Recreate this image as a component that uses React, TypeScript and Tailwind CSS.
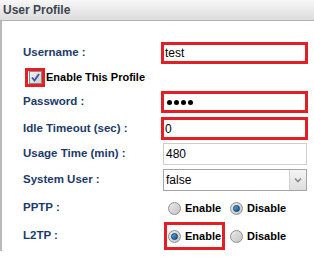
import React from 'react';

const labelCls = 'w-[138px] shrink-0 text-[11.5px] font-bold text-[#1b3a6c] leading-none';

function Radio({ checked }: { checked?: boolean }) {
    return (
        <span className="w-[13px] h-[13px] rounded-full border border-[#8f8f8f] bg-gradient-to-br from-[#e9e9e9] to-[#c4c4c4] flex items-center justify-center shrink-0">
            {checked && (
                <span className="w-[7px] h-[7px] rounded-full bg-gradient-to-br from-[#5fb0e8] to-[#0b4f8c] border border-[#0a3d6e]" />
            )}
        </span>
    );
}

function RadioGroup({ value, marked }: { value: 'enable' | 'disable'; marked?: boolean }) {
    return (
        <div className="flex items-center h-full">
            <div
                className={`flex items-center h-full w-[61px] border-[3px] pl-[1px] gap-[4px] ${
                    marked ? 'border-[#e31e24]' : 'border-transparent'
                }`}
            >
                <Radio checked={value === 'enable'} />
                <span className="text-[11px] font-bold text-black">Enable</span>
            </div>
            <div className="flex items-center ml-[5px] gap-[4px]">
                <Radio checked={value === 'disable'} />
                <span className="text-[11px] font-bold text-black">Disable</span>
            </div>
        </div>
    );
}

export default function App() {
    return (
        <div className="w-[314px] h-[273px] bg-white overflow-hidden font-['Liberation_Sans',Arial,sans-serif]">
            <div className="h-[21px] bg-gradient-to-b from-[#f7f7f7] to-[#dcdcdc] border-b border-[#b3b3b3] px-[3px] flex items-center text-[12px] font-bold text-[#3d4551]">
                User Profile
            </div>

            <div className="h-[230px] border-l-2 border-[#b9b9b9] pt-[21px] pl-[21px]">
                {/* Username */}
                <div className="flex items-center h-[22px]">
                    <span className={labelCls}>Username :</span>
                    <div className="w-[147px] h-full border-[3px] border-[#e31e24] bg-white flex items-center pl-[1px] text-[12px] text-black">
                        test
                    </div>
                </div>

                {/* Enable This Profile */}
                <div className="flex items-center h-[19px] mt-[4px]">
                    <div className="w-[20px] h-[19px] border-[3px] border-[#e31e24] flex items-center justify-center ml-[2px]">
                        <span className="w-[13px] h-[13px] border border-[#8a8a8a] bg-gradient-to-br from-[#f2f2f2] to-[#cfcfcf] flex items-center justify-center">
                            <svg width="9" height="9" viewBox="0 0 9 9">
                                <path d="M1 4.5 L3.5 7.5 L8 1" fill="none" stroke="#3b4fa8" strokeWidth="1.8" />
                            </svg>
                        </span>
                    </div>
                    <span className="ml-[1px] text-[11px] font-bold text-black">Enable This Profile</span>
                </div>

                {/* Password */}
                <div className="flex items-center h-[22px] mt-[4px]">
                    <span className={labelCls}>Password :</span>
                    <div className="w-[147px] h-full border-[3px] border-[#e31e24] bg-white flex items-center pl-[3px] gap-[2px]">
                        <span className="w-[5px] h-[5px] rounded-full bg-black" />
                        <span className="w-[5px] h-[5px] rounded-full bg-black" />
                        <span className="w-[5px] h-[5px] rounded-full bg-black" />
                        <span className="w-[5px] h-[5px] rounded-full bg-black" />
                    </div>
                </div>

                {/* Idle Timeout */}
                <div className="flex items-center h-[23px] mt-[4px]">
                    <span className={labelCls}>Idle Timeout (sec) :</span>
                    <div className="w-[147px] h-full border-[3px] border-[#e31e24] bg-white flex items-center pl-[1px] text-[12px] text-black">
                        0
                    </div>
                </div>

                {/* Usage Time */}
                <div className="flex items-center h-[22px] mt-[3px]">
                    <span className={labelCls}>Usage Time (min) :</span>
                    <div className="ml-[2px] w-[144px] h-full border border-[#cdcdcd] bg-white flex items-center pl-[2px] text-[12px] text-black">
                        480
                    </div>
                </div>

                {/* System User */}
                <div className="flex items-center h-[22px] mt-[4px]">
                    <span className={labelCls}>System User :</span>
                    <div className="ml-[2px] w-[144px] h-full border border-[#a5a5a5] bg-white flex items-stretch text-[12px] text-black">
                        <span className="flex-1 flex items-center pl-[2px]">false</span>
                        <span className="w-[17px] border-l border-[#d0d0d0] bg-gradient-to-b from-[#f4f4f4] to-[#dedede] flex items-center justify-center">
                            <svg width="8" height="6" viewBox="0 0 8 6">
                                <path d="M1 1.5 L4 4.5 L7 1.5" fill="none" stroke="#8a8a8a" strokeWidth="1.6" />
                            </svg>
                        </span>
                    </div>
                </div>

                {/* PPTP */}
                <div className="flex items-center h-[24px] mt-[5px]">
                    <span className={labelCls}>PPTP :</span>
                    <div className="ml-[3px] h-full">
                        <RadioGroup value="disable" />
                    </div>
                </div>

                {/* L2TP */}
                <div className="flex items-center h-[28px] mt-[2px]">
                    <span className={labelCls}>L2TP :</span>
                    <div className="ml-[3px] h-full">
                        <RadioGroup value="enable" marked />
                    </div>
                </div>
            </div>
        </div>
    );
}
